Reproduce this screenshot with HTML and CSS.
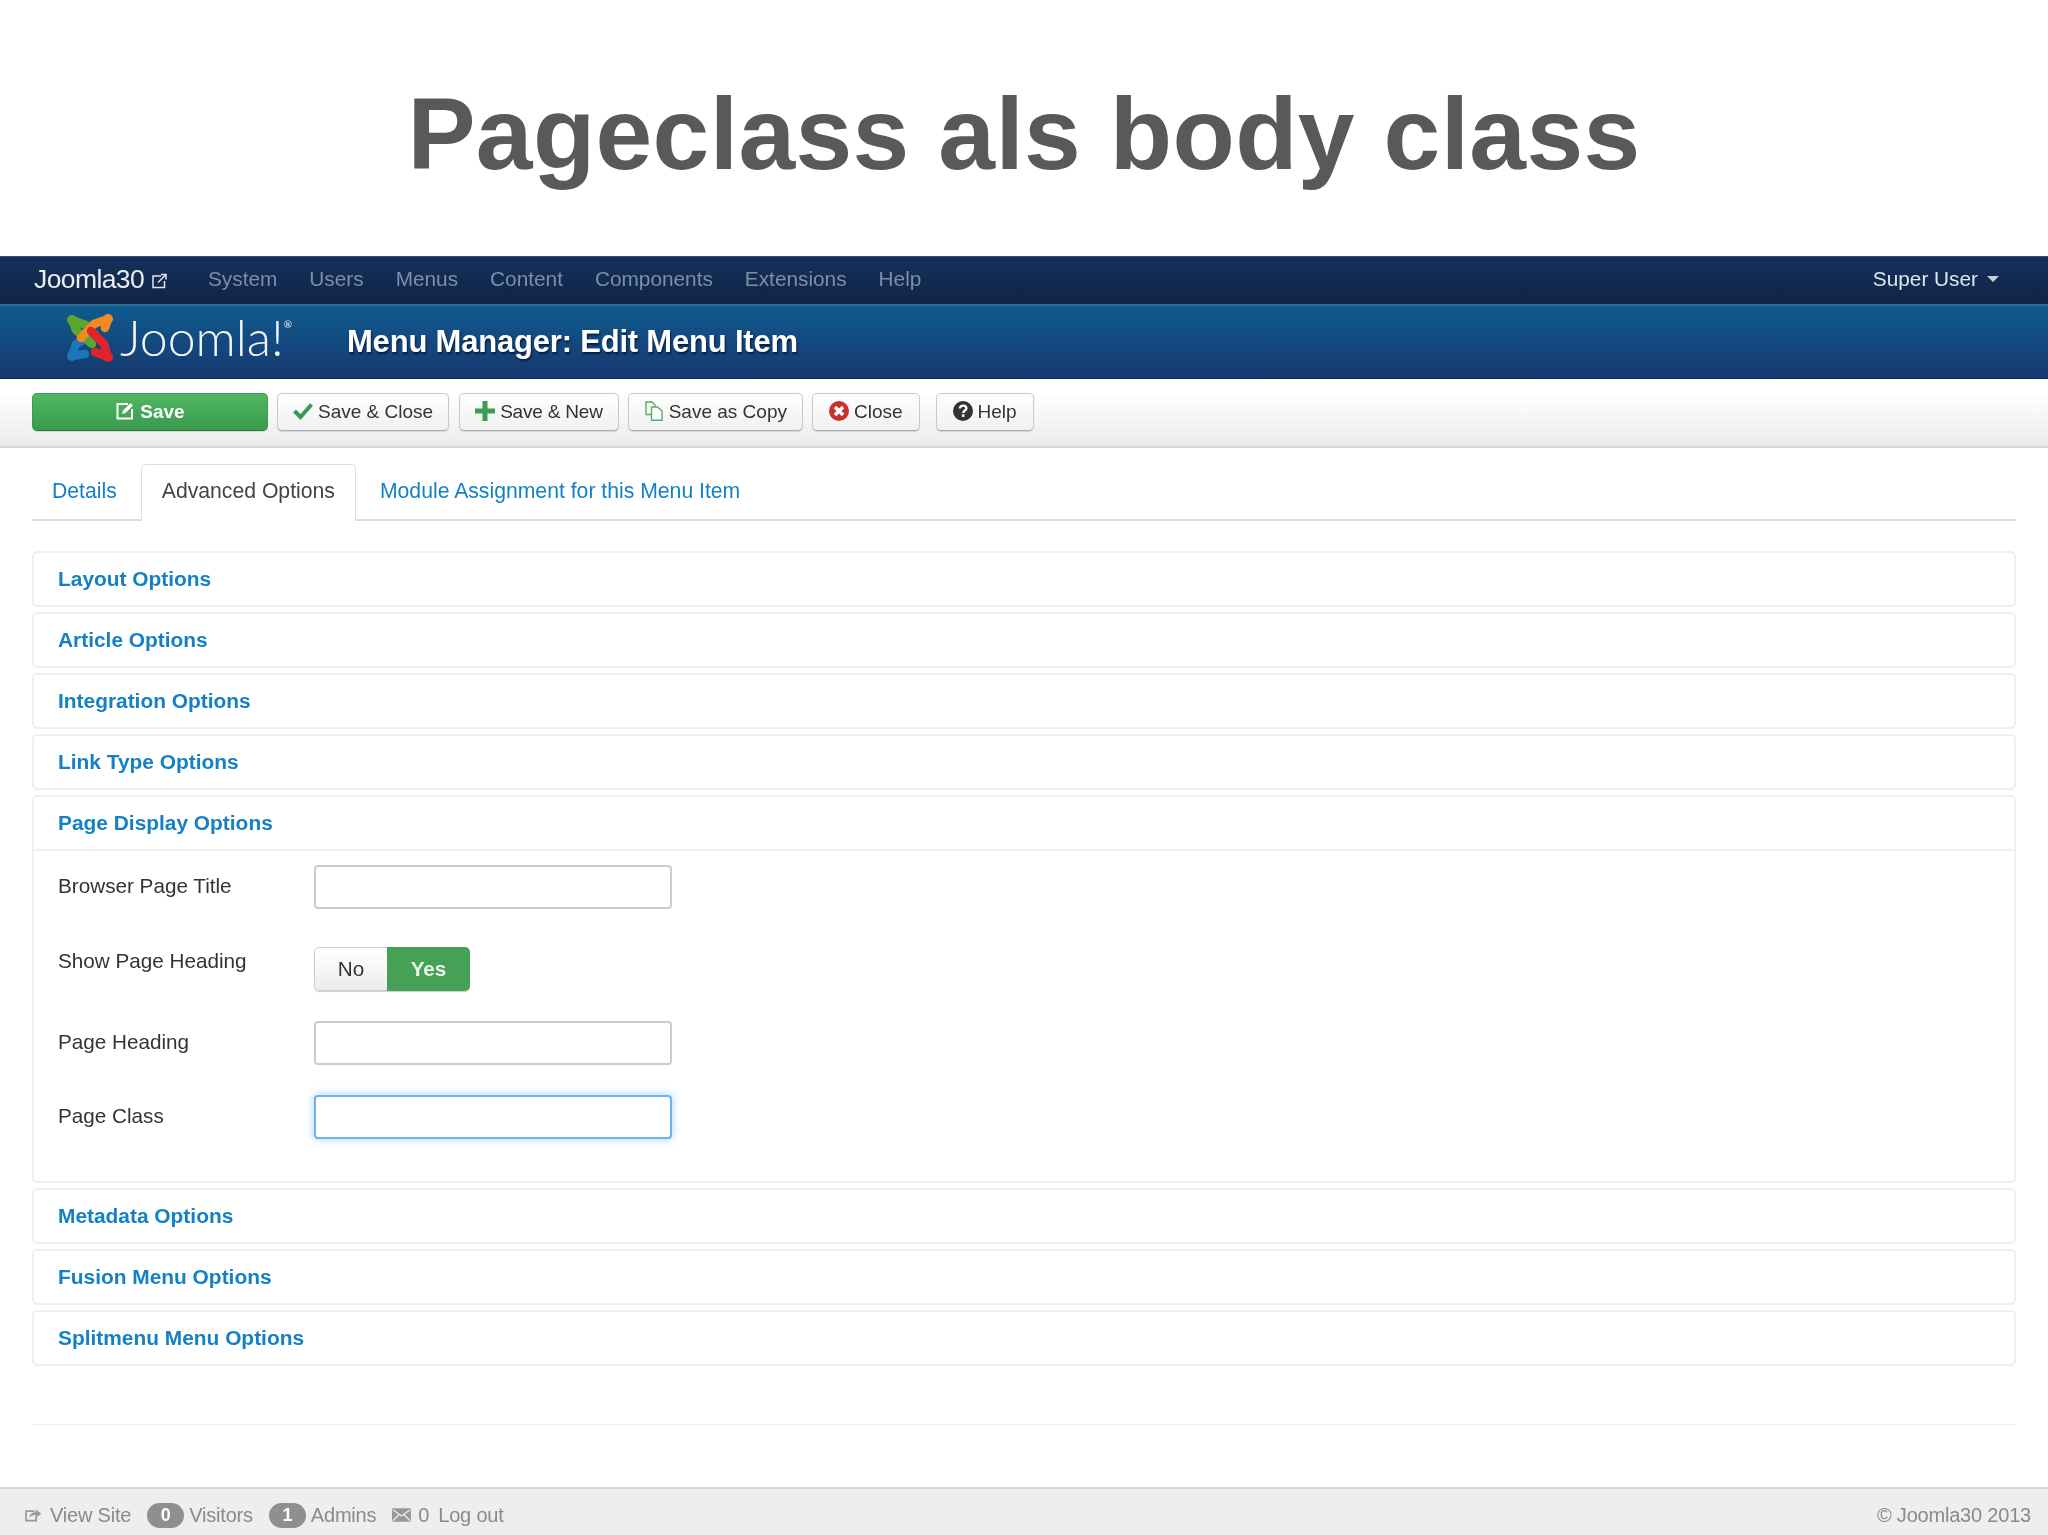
FILE: index.html
```html
<!DOCTYPE html>
<html lang="en">
<head>
<meta charset="utf-8">
<title>Pageclass als body class</title>
<link rel="stylesheet" href="styles.css">
</head>
<body>
<header class="slide-head"><h1 class="slide-title">Pageclass als body class</h1></header>

<nav class="navbar">
  <a class="brand">Joomla30
    <svg class="ico-ext" viewBox="0 0 16 16"><path d="M10 3H2V14.500H13.500V8M7 9.500 14 2.500M10 1.500H15V6.500" fill="none" stroke="#dfe6ee" stroke-width="1.500"/></svg>
  </a>
  <ul class="menu">
    <li>System</li><li>Users</li><li>Menus</li><li>Content</li><li>Components</li><li>Extensions</li><li>Help</li>
  </ul>
  <div class="user">Super User <span class="caret"></span></div>
</nav>

<div class="headerbar">
  <div class="logo">
    <svg class="logo-mark" viewBox="0 0 46 48">
      <g fill="none" stroke-width="8.500" stroke-linecap="round" stroke-linejoin="round">
        <path d="M5 42 9 30 28 20M5 42 18 40" stroke="#1c77b8"/>
        <path d="M19 11 5 6 9 16 25 30" stroke="#5aa62f"/>
        <path d="M41 5 27 10 14 24M41 5 38 14" stroke="#f08a24"/>
        <path d="M41 43 37 30 24 17M41 43 28 38" stroke="#e0242b"/>
      </g>
      <circle cx="5" cy="6" r="5" fill="#5aa62f"/>
      <circle cx="41" cy="5" r="5" fill="#f08a24"/>
      <circle cx="5" cy="42" r="5" fill="#1c77b8"/>
      <circle cx="41" cy="43" r="5" fill="#e0242b"/>
    </svg>
    <span class="logo-word">Joomla!<sup class="logo-reg">®</sup></span>
  </div>
  <h2 class="page-title">Menu Manager: Edit Menu Item</h2>
</div>

<div class="toolbar">
  <button class="btn btn-save">
    <svg class="ico" viewBox="0 0 20 20"><path d="M13 3H2.500V17.500H17V8" fill="none" stroke="#fff" stroke-width="2"/><path d="M7 13 8 9.500 15.500 2 18 4.500 10.500 12Z" fill="#fff"/></svg>Save
  </button>
  <button class="btn btn-close-save">
    <svg class="ico" viewBox="0 0 20 20"><path d="M1.500 10 7.500 16 18.500 3.500" fill="none" stroke="#3a9a52" stroke-width="4"/></svg>Save &amp; Close
  </button>
  <button class="btn btn-new">
    <svg class="ico" viewBox="0 0 20 20"><path d="M10 0V20M0 10H20" fill="none" stroke="#3d9c50" stroke-width="5"/></svg>Save &amp; New
  </button>
  <button class="btn">
    <svg class="ico" viewBox="0 0 20 20"><path d="M7 13.500H2V1H8L11 4V6" fill="none" stroke="#5aa864" stroke-width="1.400"/><path d="M7.500 6H13.500L18 10V19.300H7.500Z" fill="#fff" stroke="#5aa864" stroke-width="1.400"/></svg>Save as Copy
  </button>
  <button class="btn btn-wide">
    <svg class="ico" viewBox="0 0 20 20"><circle cx="10" cy="10" r="10" fill="#c9302c"/><path d="M6 6 14 14M14 6 6 14" stroke="#fff" stroke-width="3.600"/></svg>Close
  </button>
  <button class="btn btn-help">
    <svg class="ico" viewBox="0 0 20 20"><circle cx="10" cy="10" r="10" fill="#333"/><path d="M6.800 7.500C7 5.500 8.500 4.600 10.200 4.600 12.200 4.600 13.400 5.800 13.400 7.300 13.400 9.500 10.200 9.500 10.200 12" fill="none" stroke="#fff" stroke-width="2.400"/><rect x="8.900" y="13.300" width="2.600" height="2.600" fill="#fff"/></svg>Help
  </button>
</div>

<main class="content">
  <ul class="tabs">
    <li class="tab">Details</li>
    <li class="tab tab-active">Advanced Options</li>
    <li class="tab">Module Assignment for this Menu Item</li>
  </ul>

  <div class="accordion">
    <section class="panel"><h3 class="panel-head">Layout Options</h3></section>
    <section class="panel"><h3 class="panel-head">Article Options</h3></section>
    <section class="panel"><h3 class="panel-head">Integration Options</h3></section>
    <section class="panel"><h3 class="panel-head">Link Type Options</h3></section>
    <section class="panel">
      <h3 class="panel-head panel-head-open">Page Display Options</h3>
      <div class="panel-body">
        <div class="row row-first"><label class="label label-input">Browser Page Title</label><input class="input" type="text"></div>
        <div class="row"><span class="label">Show Page Heading</span>
          <div class="switch"><span class="switch-no">No</span><span class="switch-yes">Yes</span></div>
        </div>
        <div class="row"><label class="label label-input">Page Heading</label><input class="input" type="text"></div>
        <div class="row row-last"><label class="label label-input">Page Class</label><input class="input input-focus" type="text"></div>
      </div>
    </section>
    <section class="panel"><h3 class="panel-head">Metadata Options</h3></section>
    <section class="panel"><h3 class="panel-head">Fusion Menu Options</h3></section>
    <section class="panel"><h3 class="panel-head">Splitmenu Menu Options</h3></section>
  </div>
  <hr class="rule">
</main>

<footer class="status">
  <div class="status-left">
    <span class="stat">
      <svg class="ico-foot" viewBox="0 0 20 16"><path d="M11 3.500H1.500V14.500H13V10" fill="none" stroke="#999" stroke-width="2"/><path d="M5 11C5.500 7 8.500 4.800 12.500 4.800V1.500L19 6.500 12.500 11V8C9.500 8 7 9 5 11Z" fill="#999"/></svg>View Site
    </span>
    <span class="stat"><span class="badge">0</span>Visitors</span>
    <span class="stat"><span class="badge">1</span>Admins</span>
    <span class="stat">
      <svg class="ico-foot" viewBox="0 0 20 14"><rect x="0" y="0" width="20" height="14" rx="1" fill="#999"/><path d="M1 1.500 10 8 19 1.500M1 13 7.500 6.500M19 13 12.500 6.500" fill="none" stroke="#eee" stroke-width="1.300"/></svg>0
    </span>
    <span class="stat stat-logout">Log out</span>
  </div>
  <div class="copyright">© Joomla30 2013</div>
</footer>
</body>
</html>
```
FILE: styles.css
```css
* { box-sizing: border-box; }
html, body { margin: 0; padding: 0; }
body {
  width: 2048px;
  height: 1535px;
  overflow: hidden;
  background: #fff;
  color: #333;
  font-family: "Liberation Sans", Arial, sans-serif;
  font-size: 20.7px;
  display: flex;
  flex-direction: column;
}
ul { list-style: none; margin: 0; padding: 0; }

.slide-head {
  height: 256px;
  display: flex;
  align-items: center;
  justify-content: center;
  padding-top: 12px;
}
.slide-title {
  margin: 0;
  font-size: 102px;
  font-weight: 700;
  color: #595959;
  letter-spacing: 0.35px;
  line-height: 1;
}

.navbar, .headerbar, .toolbar, .content, .status { filter: blur(0.4px); }

.navbar {
  height: 48px;
  display: flex;
  align-items: center;
  padding: 0 49px 3px 34px;
  color: #7d8ea5;
  background: linear-gradient(#15305d, #0f2545);
  border-top: 1px solid #3b5172;
  font-size: 20.8px;
}
.brand {
  display: flex;
  align-items: center;
  gap: 7px;
  color: #e9edf2;
  font-size: 26.5px;
  letter-spacing: -0.6px;
  width: 174px;
}
.ico-ext { width: 16px; height: 16px; margin-top: 3px; }
.menu { display: flex; gap: 32px; flex: 1; }
.user { color: #dfe5ec; display: flex; align-items: center; gap: 9px; }
.caret {
  width: 0;
  height: 0;
  border-left: 6px solid transparent;
  border-right: 6px solid transparent;
  border-top: 6px solid #c9d2dc;
}

.headerbar {
  height: 75px;
  display: flex;
  align-items: center;
  background: linear-gradient(#0f5b8e, #17386f);
  border-top: 2px solid #2d6b99;
  border-bottom: 1px solid #0d2d50;
}
.logo {
  display: flex;
  align-items: flex-start;
  width: 347px;
  padding: 8px 0 0 67px;
  height: 100%;
}
.logo-mark { width: 46px; height: 48px; flex: none; }
.logo-word {
  margin: -1px 0 0 7px;
  font-family: "Lato", "Noto Sans", sans-serif;
  font-weight: 300;
  font-size: 50px;
  line-height: 48px;
  color: #f2f6fa;
  display: flex;
}
.logo-reg { font-size: 10px; line-height: 14px; margin-top: 4px; font-weight: 400; }
.page-title {
  margin: 0;
  color: #fff;
  font-size: 31px;
  font-weight: 700;
  letter-spacing: -0.2px;
  text-shadow: 1px 2px 2px #0a1c3c;
}

.toolbar {
  height: 69px;
  display: flex;
  align-items: flex-start;
  gap: 9px;
  padding: 14px 0 0 32px;
  background: linear-gradient(#fff 20%, #ebebeb);
  border-bottom: 2px solid #d4d4d4;
}
.btn {
  height: 38px;
  padding: 0 15px;
  display: flex;
  align-items: center;
  gap: 5px;
  font: inherit;
  font-size: 19px;
  color: #333;
  background: linear-gradient(#fff, #f0f0f0);
  border: 1px solid #c9c9c9;
  border-bottom-color: #aaa;
  border-radius: 5px;
  box-shadow: 0 1px 1px rgba(0,0,0,.12);
}
.btn-save {
  width: 236px;
  justify-content: center;
  color: #fff;
  font-weight: 700;
  background: linear-gradient(#4fb763, #399a4d);
  border-color: #3a9a4e;
  border-bottom-color: #2c7a3c;
}
.btn-close-save { margin-right: 1px; }
.btn-new { letter-spacing: -0.2px; }
.btn-wide { padding: 0 16px; }
.btn-help { margin-left: 7px; padding: 0 16px; }
.ico { width: 20px; height: 20px; flex: none; margin-top: -2px; }

.content { flex: 1; padding: 17px 32px 0; }
.tabs {
  height: 56px;
  display: flex;
  border-bottom: 2px solid #dedede;
  color: #1580c4;
  font-size: 21.200px;
}
.tab { padding: 12px 20px 0; line-height: 27px; margin-right: 4px; }
.tab-active {
  height: 57px;
  margin-top: -1px;
  color: #444;
  background: #fff;
  border: 1px solid #ddd;
  border-bottom: 0;
  border-radius: 5px 5px 0 0;
}

.accordion {
  margin-top: 30px;
  display: flex;
  flex-direction: column;
  gap: 5px;
}
.panel {
  border: 2px solid #efefef;
  border-radius: 5px;
}
.panel-head {
  margin: 0;
  height: 52px;
  padding-left: 24px;
  display: flex;
  align-items: center;
  color: #1580c4;
  font-size: 20.900px;
  font-weight: 700;
}
.panel-head-open { border-bottom: 2px solid #efefef; height: 54px; }
.panel-body { padding: 14px 24px 42px; }

.row { display: flex; align-items: flex-start; margin-bottom: 30px; }
.row-first { margin-bottom: 38px; }
.row-last { margin-bottom: 0; }
.label { width: 256px; line-height: 27px; flex: none; }
.label-input { padding-top: 7px; }
.input {
  width: 358px;
  height: 44px;
  background: #fff;
  border: 2px solid #ccc;
  border-radius: 4px;
  outline: none;
}
.input-focus {
  border-color: #6db3ea;
  box-shadow: 0 0 8px rgba(82,168,236,.55);
}
.switch {
  width: 156px;
  height: 44px;
  display: flex;
  border-radius: 5px;
  overflow: hidden;
  box-shadow: 0 1px 1px rgba(0,0,0,.2);
}
.switch-no {
  width: 73px;
  display: flex;
  align-items: center;
  justify-content: center;
  background: linear-gradient(#fff, #ececec);
  border: 1px solid #ccc;
  border-right: 0;
  border-radius: 5px 0 0 5px;
}
.switch-yes {
  flex: 1;
  display: flex;
  align-items: center;
  justify-content: center;
  color: #e8f5ea;
  font-weight: 700;
  background: #46a055;
}

.rule {
  margin: 58px 0 0;
  border: 0;
  border-top: 1px solid #eee;
}

.status {
  height: 48px;
  display: flex;
  align-items: center;
  justify-content: space-between;
  padding: 6px 17px 0 24px;
  color: #8a8a8a;
  font-size: 20px;
  background: #eeeef0;
  border-top: 2px solid #d8d8dc;
}
.status-left { display: flex; align-items: center; gap: 16px; }
.stat { display: flex; align-items: center; gap: 5px; letter-spacing: -0.2px; }
.stat-logout { margin-left: -7px; }
.ico-foot { width: 19px; height: 14px; margin-right: 2px; }
.badge {
  width: 37px;
  height: 25px;
  border-radius: 13px;
  display: flex;
  align-items: center;
  justify-content: center;
  color: #fff;
  font-weight: 700;
  font-size: 18px;
  background: #8f8f8f;
}
.copyright { letter-spacing: -0.2px; }
```
